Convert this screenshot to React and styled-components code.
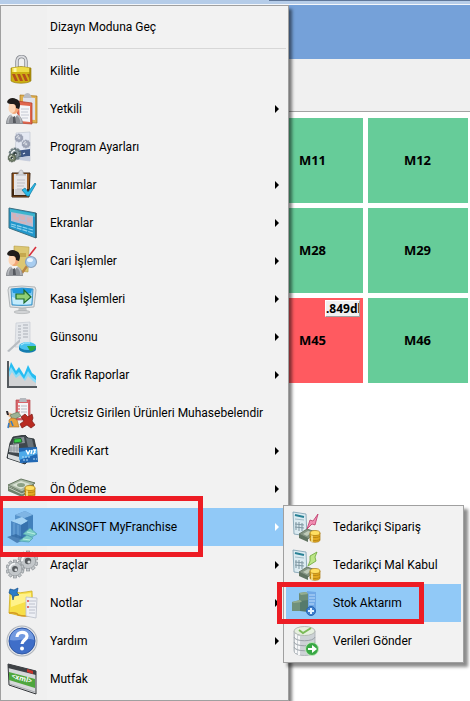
import styled, { createGlobalStyle } from 'styled-components';

const GlobalStyle = createGlobalStyle`
  * {
    box-sizing: border-box;
  }
  body {
    margin: 0;
    background-color: #fff;
    font-family: Roboto, 'Noto Sans', sans-serif;
  }
`;

const Svg = ({ children }) => (
  <svg width="32" height="32" viewBox="0 0 32 32" aria-hidden="true">
    {children}
  </svg>
);

const Person = () => (
  <>
    <path d="M0 31c0-6 3-10 8-10s9 4 9 10z" fill="#8d9095" />
    <path d="M2 30c0-4 2-7 4-8M15 30c0-4-2-7-4-8" fill="none" stroke="#b9bcc0" strokeWidth="1.4" />
    <path d="M5 21l3 5 4-5z" fill="#f4f4f4" />
    <path d="M7 24l2-1 1 7H7z" fill="#55585e" />
    <ellipse cx="8" cy="14" rx="5" ry="7" fill="#f3a878" />
    <ellipse cx="6" cy="15" rx="3.500" ry="5" fill="#fcd6b6" />
    <path d="M1 9c1-4 6-5 9-3 4 1 5 6 3 10l-3-1c0-3-1-4-3-4-3 0-5 0-6-2z" fill="#1f1c1a" />
  </>
);

const teeth = [0, 36, 72, 108, 144];

const Gear = ({ cx, cy, r, fill = '#c3c7ca', stroke = '#83898d', hole = '#55595c' }) => (
  <g transform={`translate(${cx} ${cy})`}>
    {teeth.map((angle) => (
      <rect
        key={angle}
        x={-r * 0.17}
        y={-r}
        width={r * 0.34}
        height={r * 2}
        fill={fill}
        stroke={stroke}
        strokeWidth="0.6"
        transform={`rotate(${angle})`}
      />
    ))}
    <circle r={r * 0.76} fill={fill} stroke={stroke} strokeWidth="0.5" />
    <path d={`M${-r * 0.6} 0A${r * 0.6} ${r * 0.6} 0 0 1 0 ${-r * 0.6}`} fill="none" stroke="#f4f6f7" strokeWidth={r * 0.2} />
    <circle r={r * 0.32} fill={hole} />
    <circle cx={r * 0.1} cy={r * 0.1} r={r * 0.16} fill="#d8dcde" />
  </g>
);

const Coins = ({ x, y }) => (
  <g transform={`translate(${x} ${y})`} stroke="#a9790d" strokeWidth="0.7">
    <path d="M0 3v7c0 3 10 3 10 0V3z" fill="#e3aa22" />
    <path d="M0 6c1 2 9 2 10 0M0 9c1 2 9 2 10 0" fill="none" />
    <path d="M2 5v7" stroke="#fff0a0" strokeWidth="1.4" />
    <ellipse cx="5" cy="3" rx="5" ry="2.5" fill="#ffdf62" />
  </g>
);

const LockIcon = () => (
  <Svg>
    <path d="M11 14V6c0-6 9-6 9 0v8" fill="none" stroke="#84878d" strokeWidth="3.4" />
    <path d="M11 14V6c0-6 9-6 9 0v8" fill="none" stroke="#dcdde1" strokeWidth="1.8" />
    <path d="M5 13q10-3 20 0v13c-4 3-16 3-20 0z" fill="#cdae12" stroke="#8f760b" strokeWidth="0.6" />
    <path d="M6 13q9-2 18 0v4H6z" fill="#eedc47" />
    <path d="M6 19h3l3 7H9zM11 19h3l3 7h-3zM16 19h3l3 7h-3zM21 19h3v6z" fill="#b4501c" />
    <path d="M9 13v4" stroke="#fff8a8" strokeWidth="3" />
    <path d="M24 13v13" stroke="#9d8109" strokeWidth="1.4" />
  </Svg>
);

const StaffIcon = () => (
  <Svg>
    <path d="M14 2l17 1v27l-17-1z" fill="#dfb050" stroke="#a8741b" strokeWidth="0.7" />
    <path d="M17 4l12 1v22l-12-1z" fill="#dfe2ec" />
    <path d="M18 3c1-4 6-4 7 0l1 2h-9z" fill="#b9bcc2" />
    <path d="M11 8l15 2v21l-14-1z" fill="#e0664e" stroke="#b03a27" strokeWidth="0.7" />
    <path d="M13 12l11 1v16l-10-1z" fill="#f4f5f8" />
    <path d="M15 16h8M15 19h7M15 22h8M16 25h6" stroke="#b9bdc9" strokeWidth="0.8" />
    <Person />
  </Svg>
);

const ProgramIcon = () => (
  <Svg>
    <path d="M10 2l14-1v29l-15-2z" fill="#e4e8f2" stroke="#c3c8d4" strokeWidth="0.7" />
    <path d="M9 20l15-2v7l-15 2z" fill="#3d5685" />
    <path d="M12 24l3-1M17 23l2-1" stroke="#dfe7f5" strokeWidth="1.2" />
    <path d="M9 27l15-2v5l-15-2z" fill="#c3cbdd" />
    <Gear cx={13} cy={7} r={4} fill="#a3a9ba" stroke="#9299ac" hole="#c7ccda" />
    <Gear cx={20} cy={13} r={4} fill="#a3a9ba" stroke="#9299ac" hole="#c7ccda" />
    <Gear cx={9} cy={23} r={6} fill="#86969b" stroke="#4d5f63" hole="#2d3c3c" />
    <Gear cx={6} cy={27} r={4} fill="#87937a" stroke="#4a584b" hole="#2d3c3c" />
  </Svg>
);

const DefinitionIcon = () => (
  <Svg>
    <path d="M6 4h18l-1 24H6z" fill="#9a5b22" stroke="#3a220f" />
    <path d="M6 20h17v7H6z" fill="#40260f" />
    <path d="M8 5h13v21H8z" fill="#e6e6e8" />
    <path d="M9 20h11v6H9z" fill="#cfcfd2" />
    <path d="M11 11h8M11 14h8M11 17h7M11 20h5" stroke="#bfbfc4" />
    <path d="M10 6c1-1 3-1 3-3s4-3 4 0 2 2 3 3z" fill="#d9dadd" stroke="#9c9fa4" strokeWidth="0.6" />
    <path d="M16 21l3-2 3 4 7-9 1 1-7 12h-2z" fill="#27b8e6" stroke="#12799f" strokeWidth="0.7" />
  </Svg>
);

const ScreensIcon = () => (
  <Svg>
    <path d="M3 1l27 5v25L3 21z" fill="#2197cb" stroke="#3d7081" />
    <path d="M4 2l25 5v3L4 5z" fill="#3fb6cd" />
    <path d="M5 5l22 4v11L5 14z" fill="#b9bdd2" />
    <path d="M6 6l4 1v3l3 0v4l-6-2zM12 8l7 1v4l-4 0zM21 10l5 1v5l-5-1zM14 14l6 1v2l-6-1z" fill="#d6b2b8" />
    <path d="M5 17l22 6M5 19l22 7" stroke="#8fd3ef" strokeWidth="1.2" strokeDasharray="5 1" />
    <path d="M30 6v25" stroke="#33535f" strokeWidth="1.4" />
  </Svg>
);

const AccountIcon = () => (
  <Svg>
    <path d="M8 1l15 1-1 25-14-2z" fill="#dcc772" stroke="#b69c43" strokeWidth="0.6" />
    <path d="M14 8h6v4h-6z" fill="#c5a84e" />
    <path d="M30 2l-7 9" stroke="#d8303c" strokeWidth="1.6" />
    <path d="M21 21l-5 7" stroke="#b98544" strokeWidth="2.4" />
    <circle cx="25" cy="17" r="5.5" fill="#a8cdf0" stroke="#8ba2bb" strokeWidth="1.2" />
    <ellipse cx="24" cy="15" rx="3" ry="2" fill="#e9f5ff" />
    <Person />
  </Svg>
);

const CashIcon = () => (
  <Svg>
    <path d="M13 24h7l1 4h-9z" fill="#c4c7c9" />
    <ellipse cx="16" cy="29" rx="8" ry="1.6" fill="#d2d4d6" stroke="#a5a8aa" strokeWidth="0.6" />
    <path d="M3 4q13-2 26 0l1 3-2 17q-12 2-24 0L2 7z" fill="#e1e4e6" stroke="#a3a8ab" strokeWidth="0.8" />
    <path d="M5 6q11-2 22 0l-1 16q-10 1-20 0z" fill="#7cc9f4" stroke="#2d85b9" strokeWidth="0.8" />
    <path d="M6 6q10-2 20 0l-1 4q-9 1-18 0z" fill="#2298dc" />
    <path d="M6 14q10 4 20-2l-1 9q-9 1-18 0z" fill="#c5ecfb" />
    <path d="M10 11h8V7l7 7-7 6v-4h-8z" fill="#91cf75" stroke="#1d6b2c" strokeWidth="1.2" />
  </Svg>
);

const DayEndIcon = () => (
  <Svg>
    <path d="M10 2l14-1v25H9z" fill="#e4e7eb" stroke="#c7ccd2" strokeWidth="0.7" />
    <path d="M12 5h3M17 4h5M12 8h3M17 7h5M12 11h3M17 10h5M12 14h3M17 13h5M12 17h3M17 16h5" stroke="#a9afb7" strokeWidth="1.2" />
    <path d="M1 30l13-12v3L3 31z" fill="#b8bdc2" />
    <path d="M13 25v3c1 5 17 5 17 0v-3z" fill="#157db0" />
    <ellipse cx="21.5" cy="25" rx="8.5" ry="4" fill="#49c2ee" />
    <path d="M21 25l9 0c0 3-3 5-6 5z" fill="#29a842" />
    <path d="M15 24q3-3 9-2" stroke="#b8efff" fill="none" />
  </Svg>
);

const ChartIcon = () => (
  <Svg>
    <path d="M3 27V10l2-7 5 9 3-4 5 8 4-10 4 8 4 3v10z" fill="#26bdf2" />
    <path d="M3 27V13l2-5 5 8 3-3 5 7 4-8 4 6 4 3v6z" fill="#8bdcf7" />
    <path d="M3 27V18l3-5 4 6 4-3 5 6 3-5 5 5 3 2v3z" fill="#d2d3d5" />
    <path d="M2 2v26h29" fill="none" stroke="#555a5e" strokeWidth="2" />
  </Svg>
);

const FreeItemsIcon = () => (
  <Svg>
    <path d="M10 3h14v20H10z" fill="#d9656a" stroke="#b4484c" strokeWidth="0.7" />
    <path d="M12 6h10v15H12z" fill="#f5f4f6" />
    <path d="M14 1h6l1 4h-8z" fill="#b5b8bd" />
    <path d="M15 9h6M15 12h6M15 15h6" stroke="#b8bbc4" />
    <path d="M12 9h2M12 12h2M12 15h2" stroke="#d64d50" />
    <path d="M0 15l5 1 4 4-3 2-4-3z" fill="#efbe96" />
    <path d="M0 14l2 0 1 4-2 0z" fill="#2c2930" />
    <path d="M4 18l8-3 3 4-8 4z" fill="#9cb295" stroke="#64785d" strokeWidth="0.7" />
    <path d="M3 23c2-3 6-2 8 0l2 7H3z" fill="#e8a23e" stroke="#ad6c1c" strokeWidth="0.6" />
    <path d="M5 24l2 5M3 26l-1 5" stroke="#3a7bc0" strokeWidth="1.6" />
    <path d="M15 20l4-3 3 3 4-3 1 4-1 3 3 4-4 3-4-3-5 3-2-4 4-3z" fill="#b92a21" stroke="#791610" strokeWidth="0.7" />
  </Svg>
);

const CreditCardIcon = () => (
  <Svg>
    <path d="M7 2l12-2 3 3 6 1 2 9-3 8-8 8L1 23 4 8z" fill="#3f474c" stroke="#20262a" strokeWidth="0.8" />
    <path d="M8 3l10-1 1 6L7 9z" fill="#889197" />
    <path d="M8 4l7-.5 1 3.500-8 1z" fill="#39cf49" stroke="#10491c" strokeWidth="0.7" />
    <path d="M20 3l2 9 6 1-2-9z" fill="#697379" />
    <path d="M4 10l9-1v9l-10-1z" fill="#c5cacc" />
    <path d="M5 11v6M8 10v8M11 10v8M3 13h10M3 15h10" stroke="#858e94" strokeWidth="0.7" />
    <path d="M2 19l15 4v5L2 23z" fill="#d8dcdd" />
    <path d="M13 13l18-1 1 15-18 1z" fill="#2269b5" />
    <path d="M13 17l18-3v5l-18 6z" fill="#4eaae9" />
    <path d="M20 15l2 4 2-4M26 15l-1 4M30 15l-2 0 1 2-2 2" fill="none" stroke="#fff" strokeWidth="1.3" />
    <path d="M16 22h8M17 25h6M27 24h4" stroke="#b9dff5" strokeDasharray="2 1" />
  </Svg>
);

const PrepaymentIcon = () => (
  <Svg>
    <path d="M2 12l13-6 14 4-13 9z" fill="#a9b8a4" stroke="#65765f" />
    <path d="M6 12l9-4 9 3-9 5z" fill="#d9e1d3" />
    <ellipse cx="15" cy="12" rx="4" ry="2" fill="#8ba085" />
    <path d="M2 13l14 6 12-8v4l-12 9-14-6z" fill="#6f816b" />
    <path d="M3 15l13 6 10-6" stroke="#c7d1c2" fill="none" />
    <Coins x={19} y={12} />
  </Svg>
);

const FranchiseIcon = () => (
  <Svg>
    <path d="M9 4l10-4 8 4v19l-8 4-10-5z" fill="#5794cc" />
    <path d="M9 4l10-4 8 4-8 3z" fill="#7fb5e4" />
    <path d="M19 7l8-3v19l-8 4z" fill="#4280bb" />
    <path d="M5 10l11-4 6 4-7 4z" fill="#a5d3f4" />
    <path d="M5 10l10 4v14L5 25z" fill="#4d89c4" />
    <path d="M15 14l7-4v15l-7 3z" fill="#3772ae" />
    <path d="M8 12v14M12 14v13" stroke="#70a8da" />
    <path d="M1 26l9-3 10 5-9 4z" fill="#2d649c" opacity=".7" />
    <path d="M17 23l7-6 7 6-5 3z" fill="#7accc6" stroke="#4c9fb0" strokeWidth="0.7" />
    <path d="M13 30l8-6 6 3-4 4z" fill="#7accc6" stroke="#4c9fb0" strokeWidth="0.7" />
    <path d="M21 21l8 2M17 28l7 1" stroke="#b5eee1" />
  </Svg>
);

const ToolsIcon = () => (
  <Svg>
    <Gear cx={22} cy={12} r={10} />
    <Gear cx={9} cy={20} r={9} />
  </Svg>
);

const NotesIcon = () => (
  <Svg>
    <path d="M4 5q10 2 22-1l1 24q-10 2-16 0L3 26z" fill="#f7df48" stroke="#cfae1f" strokeWidth="0.8" />
    <path d="M5 6q9 2 20 0v7L5 20z" fill="#fff28a" />
    <path d="M3 26q8-1 9 2 7 2 13 0" stroke="#d59a22" fill="none" strokeWidth="1.4" />
    <path d="M20 10l11 1-1 20-10-2z" fill="#eef0f5" stroke="#b9bec9" strokeWidth="0.8" />
    <path d="M23 14h7M23 17h6M23 20h7M23 23h6M23 26h6" stroke="#aeb4c2" strokeWidth="0.8" />
    <path d="M21 14h2M21 20h2" stroke="#d44" strokeWidth="1.3" />
    <path d="M4 2l4 1 4-2-1 5 2 2-5 1-1 4-1-5-3-2z" fill="#2a7cc9" stroke="#16508c" strokeWidth="0.7" />
  </Svg>
);

const HelpIcon = () => (
  <Svg>
    <circle cx="16" cy="16" r="15.500" fill="#aeb3ba" />
    <circle cx="16" cy="16" r="14.500" fill="#e4e6ea" />
    <circle cx="16" cy="16" r="13" fill="#3f6ec8" stroke="#2f57a3" />
    <path d="M4 15c0-15 24-15 24 0-6-3-18 2-24 0z" fill="#729ae0" />
    <path d="M11 12c0-6 10-6 10-1 0 4-5 4-5 8" fill="none" stroke="#fff" strokeWidth="3.2" />
    <circle cx="16" cy="23.500" r="2" fill="#fff" />
  </Svg>
);

const KitchenIcon = () => (
  <Svg>
    <path d="M2 1l28 7v23L3 22z" fill="#d6d8da" stroke="#34383b" />
    <path d="M2 1l28 7v4L2 5z" fill="#3e4145" />
    <path d="M21 6l6 2v3l-6-2z" fill="#cb352c" />
    <path d="M3 9l26 7v9L3 17z" fill="#4ea63d" />
    <text x="5" y="15" transform="rotate(15 5 15)" fontFamily="Open Sans, sans-serif" fontSize="7" fontWeight="700" fill="#fff">
      &lt;xml&gt;
    </text>
    <path d="M4 21l25 8" stroke="#a9adb0" />
  </Svg>
);

const SupplyBase = () => (
  <>
    <path d="M4 1l13 2 1 22-13-2z" fill="#dcebf1" stroke="#84a5b4" strokeWidth="0.9" />
    <path d="M6 4l9 2" stroke="#298195" strokeWidth="2" />
    <path d="M6 8l9 1" stroke="#a3bdc7" />
    <path d="M7 11v8M10 11v9M13 12v8M6 13l9 1M6 16l9 1" stroke="#7f97a2" strokeWidth="1" />
    <path d="M10 23l8-5 9 3-8 7z" fill="#859584" stroke="#54644f" strokeWidth="0.7" />
    <path d="M10 23l9 4v4l-9-4z" fill="#5f7260" />
    <path d="M14 23l5-3 4 1-5 4z" fill="#bfcbb9" />
    <Coins x={21} y={19} />
  </>
);

const OrderIcon = () => (
  <Svg>
    <SupplyBase />
    <path d="M29 3l-3 11-3-1-5 5 3-9 3 1z" fill="#f18db2" stroke="#bd3969" strokeWidth="0.8" />
  </Svg>
);

const ReceiveIcon = () => (
  <Svg>
    <SupplyBase />
    <path d="M28 3l-7 4 0 5-2 5 8-5-1-4z" fill="#bce586" stroke="#68a637" strokeWidth="0.8" />
  </Svg>
);

const StockIcon = () => (
  <Svg>
    <path d="M18 4l9 1v18l-9-1z" fill="#70a9e7" />
    <path d="M20 8h6M20 11h6M20 14h6M20 17h5" stroke="#bddcfa" />
    <path d="M10 6l7-1 2 2v8h-9z" fill="#6c8c77" />
    <path d="M3 15l8-2v11H3z" fill="#70917b" />
    <path d="M11 14l8-1v12l-8-1z" fill="#557a6c" />
    <path d="M10 6l7-1 2 2-7 1zM3 15l8-2 2 2-8 1z" fill="#94ad8f" />
    <circle cx="22" cy="24" r="4.500" fill="#3f80cf" stroke="#2866b3" />
    <path d="M22 21v6M19 24h6" stroke="#e1f1ff" strokeWidth="2" />
  </Svg>
);

const DatabaseIcon = () => (
  <Svg>
    <path d="M5 6v20c0 6 21 6 21 0V6z" fill="#cdd2d6" stroke="#a5abb0" strokeWidth="0.8" />
    <path d="M7 9v19M10 11v19" stroke="#f6f7f8" strokeWidth="2" />
    <path d="M5 12c1 5 20 5 21 0M5 17c1 5 20 5 21 0M5 22c1 5 20 5 21 0" fill="none" stroke="#9aa1a7" />
    <ellipse cx="15.500" cy="6" rx="10.500" ry="4.500" fill="#e6f0e0" stroke="#a9b0ab" strokeWidth="0.8" />
    <path d="M10 5l4 3 8-5" stroke="#7bbb58" strokeWidth="2" fill="none" />
    <circle cx="23" cy="24" r="6.500" fill="#38a844" stroke="#bfe8bc" />
    <path d="M19 23h4v-3l5 4-5 4v-3h-4z" fill="#fff" />
  </Svg>
);

const menuItems = [
  { label: 'Kilitle', icon: <LockIcon /> },
  { label: 'Yetkili', icon: <StaffIcon />, more: true },
  { label: 'Program Ayarları', icon: <ProgramIcon /> },
  { label: 'Tanımlar', icon: <DefinitionIcon />, more: true },
  { label: 'Ekranlar', icon: <ScreensIcon />, more: true },
  { label: 'Cari İşlemler', icon: <AccountIcon />, more: true },
  { label: 'Kasa İşlemleri', icon: <CashIcon />, more: true },
  { label: 'Günsonu', icon: <DayEndIcon />, more: true },
  { label: 'Grafik Raporlar', icon: <ChartIcon />, more: true },
  { label: 'Ücretsiz Girilen Ürünleri Muhasebelendir', icon: <FreeItemsIcon /> },
  { label: 'Kredili Kart', icon: <CreditCardIcon />, more: true },
  { label: 'Ön Ödeme', icon: <PrepaymentIcon />, more: true },
  {
    label: 'AKINSOFT MyFranchise',
    icon: <FranchiseIcon />,
    more: true,
    active: true,
    children: [
      { label: 'Tedarikçi Sipariş', icon: <OrderIcon /> },
      { label: 'Tedarikçi Mal Kabul', icon: <ReceiveIcon /> },
      { label: 'Stok Aktarım', icon: <StockIcon />, active: true },
      { label: 'Verileri Gönder', icon: <DatabaseIcon /> },
    ],
  },
  { label: 'Araçlar', icon: <ToolsIcon />, more: true },
  { label: 'Notlar', icon: <NotesIcon />, more: true },
  { label: 'Yardım', icon: <HelpIcon />, more: true },
  { label: 'Mutfak', icon: <KitchenIcon /> },
];

const tables = [
  { name: 'M11' },
  { name: 'M12' },
  { name: 'M28' },
  { name: 'M29' },
  { name: 'M45', total: '.849dl' },
  { name: 'M46' },
];

const MenuItem = ({ item }) => {
  const { label, icon, more, active, children } = item;
  return (
    <Item>
      <ItemButton type="button" role="menuitem" $active={active}>
        <IconSlot>{icon}</IconSlot>
        <span>{label}</span>
        {more && <Arrow $active={active} />}
      </ItemButton>
      {children && (
        <SubMenu role="menu">
          {children.map((child) => (
            <MenuItem item={child} key={child.label} />
          ))}
        </SubMenu>
      )}
      {active && (children ? <ParentMark /> : <ChildMark />)}
    </Item>
  );
};

const App = () => {
  return (
    <Screen>
      <GlobalStyle />
      <WindowEdge />
      <Header />
      <Toolbar />
      <Tables>
        {tables.map(({ name, total }) => (
          <TableButton type="button" key={name} $busy={Boolean(total)}>
            {name}
            {total && <Total>{total}</Total>}
          </TableButton>
        ))}
      </Tables>
      <MainMenu role="menu">
        <MenuItem item={{ label: 'Dizayn Moduna Geç' }} />
        <Separator role="separator" />
        {menuItems.map((item) => (
          <MenuItem item={item} key={item.label} />
        ))}
      </MainMenu>
    </Screen>
  );
};

const Screen = styled.main`
  position: relative;
  min-height: 100vh;
  overflow: hidden;
`;

const WindowEdge = styled.div`
  height: 5px;
  background: linear-gradient(#5f7799, #5f7799) 269px 0 / 100% 1px no-repeat #b6cde9;
  border-bottom: 1px solid #f4f7fb;
`;

const Header = styled.header`
  height: 54px;
  background-color: #75a1d9;
`;

const Toolbar = styled.div`
  height: 53px;
  background-color: #f0f0f0;
  border-bottom: 1px solid #a3a3a3;
`;

const Tables = styled.section`
  display: grid;
  grid-template-columns: repeat(2, 100px);
  grid-auto-rows: 85px;
  gap: 5px;
  justify-content: end;
  padding: 6px 2px;
`;

const TableButton = styled.button`
  position: relative;
  border: none;
  padding: 0 1px 2px 0;
  background-color: ${({ $busy }) => ($busy ? '#ff5a60' : '#66cc99')};
  color: #000;
  font-family: 'Noto Sans', sans-serif;
  font-size: 13px;
  font-weight: 700;
`;

const Total = styled.span`
  position: absolute;
  top: 2px;
  right: 3px;
  width: 35px;
  overflow: hidden;
  background-color: #f0f0f0;
  border: 1px solid #fff;
  border-right-color: #a0a0a0;
  border-bottom-color: #a0a0a0;
  font-size: 12px;
  line-height: 15px;
  text-align: left;
  white-space: nowrap;
`;

const MenuList = styled.ul`
  position: absolute;
  margin: 0;
  padding: 2px;
  list-style: none;
  border: 1px solid #a0a0a0;
  background: linear-gradient(90deg, #f0f0f0 46px, #f2f2f2 46px);
`;

const MainMenu = styled(MenuList)`
  top: 5px;
  left: 0;
  min-width: 289px;
  box-shadow: 3px 4px 3px rgba(0, 0, 0, 0.5);
`;

const SubMenu = styled(MenuList)`
  top: -3px;
  left: calc(100% - 3px);
  min-width: 181px;
  z-index: 2;
  box-shadow: 4px 4px 3px rgba(0, 0, 0, 0.45);
`;

const Item = styled.li`
  position: relative;
`;

const ItemButton = styled.button`
  display: flex;
  align-items: center;
  width: 100%;
  height: 38px;
  padding: 0 7px 0 3px;
  border: none;
  background-color: ${({ $active }) => ($active ? '#91c9f7' : 'transparent')};
  color: #000;
  font-family: inherit;
  font-size: 12px;
  text-align: left;
  white-space: nowrap;
`;

const IconSlot = styled.span`
  flex: none;
  width: 32px;
  height: 32px;
  margin-right: 12px;
`;

const Arrow = styled.i`
  margin-left: auto;
  border: 4px solid transparent;
  border-right: none;
  border-left-color: ${({ $active }) => ($active ? '#fff' : '#000')};
`;

const Separator = styled.li`
  height: 6px;
  margin-left: 45px;
  background: linear-gradient(#d7d7d7, #d7d7d7) 0 2px / 100% 1px no-repeat;
`;

const Mark = styled.span`
  position: absolute;
  z-index: 1;
  border: 5px solid #ed1c24;
  pointer-events: none;
`;

const ParentMark = styled(Mark)`
  top: -12px;
  left: -5px;
  width: 205px;
  height: 61px;
`;

const ChildMark = styled(Mark)`
  top: -2px;
  left: -9px;
  width: 147px;
  height: 42px;
`;

export default App;
